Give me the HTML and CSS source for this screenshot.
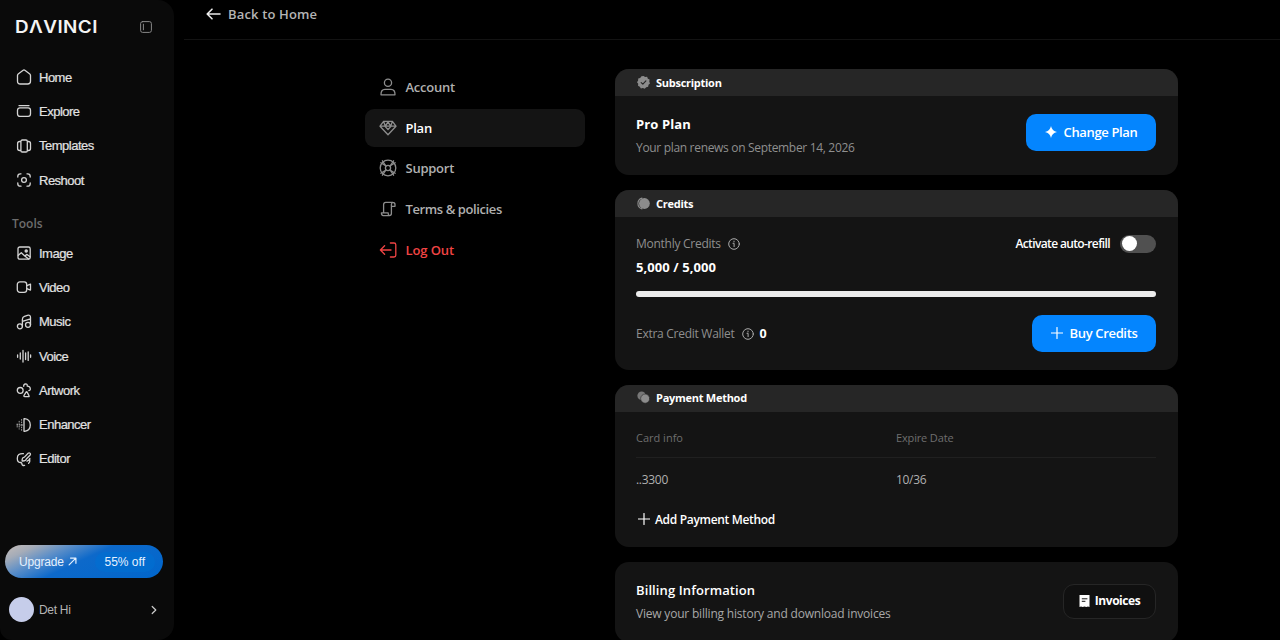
FILE: index.html
```html
<!DOCTYPE html>
<html lang="en">
<head>
<meta charset="utf-8">
<title>Davinci – Plan</title>
<link rel="stylesheet" href="styles.css">
</head>
<body>
<div class="app">
  <aside class="sidebar">
    <div class="brand">
      <span class="logo">DΛVINCI</span>
      <svg class="collapse" viewBox="0 0 12 12"><rect x=".6" y=".6" width="10.8" height="10.8" rx="2"/><path d="M3.4 3.2v5.6"/></svg>
    </div>
    <nav class="nav">
      <a class="nav-item"><svg viewBox="0 0 16 16"><path d="M1.5 6.4Q1.5 5.5 2.2 4.9L6.8 1.4Q8 .5 9.2 1.4L13.8 4.9Q14.5 5.5 14.5 6.4V12.2Q14.5 15 11.7 15H4.3Q1.5 15 1.5 12.2Z"/></svg><span>Home</span></a>
      <a class="nav-item"><svg viewBox="0 0 16 16"><path d="M3 2.6H13"/><rect x="1.5" y="4.8" width="13" height="8.6" rx="2.4"/></svg><span>Explore</span></a>
      <a class="nav-item"><svg viewBox="0 0 16 16"><rect x="4.9" y="2" width="6.4" height="12" rx="1.3"/><path d="M4.5 3.5H3.7Q1.6 3.5 1.6 5.6V10.4Q1.6 12.5 3.7 12.5H4.5M11.7 3.5H12.5Q14.5 3.5 14.5 5.6V10.4Q14.5 12.5 12.5 12.5H11.7"/></svg><span>Templates</span></a>
      <a class="nav-item"><svg viewBox="0 0 16 16"><circle cx="8" cy="8" r="2.4"/><path d="M1.8 5V4.3Q1.8 1.8 4.3 1.8H5M11 1.8H11.7Q14.2 1.8 14.2 4.3V5M14.2 11V11.7Q14.2 14.2 11.7 14.2H11M5 14.2H4.3Q1.8 14.2 1.8 11.7V11"/></svg><span>Reshoot</span></a>
    </nav>
    <div class="nav-title">Tools</div>
    <nav class="nav">
      <a class="nav-item"><svg viewBox="0 0 16 16"><rect x="2" y="2" width="12.2" height="12.2" rx="1.8"/><circle cx="10.2" cy="6" r="1.1" fill="currentColor"/><path d="M2.3 10.3L5.3 7.7L8.5 10.8L12.6 14M8.7 11L11 9.4L14 11.8"/></svg><span>Image</span></a>
      <a class="nav-item"><svg viewBox="0 0 16 16"><rect x="1.3" y="2.9" width="9.4" height="10.4" rx="2.6"/><path d="M10.8 6.6L14.5 5.1V11.1L10.8 9.6"/></svg><span>Video</span></a>
      <a class="nav-item"><svg viewBox="0 0 16 16"><circle cx="3.9" cy="12.3" r="2.5"/><circle cx="12" cy="10.8" r="2.5"/><path d="M6.4 12.3V5.2Q6.4 3.2 8.5 2.4L11.4 1.4Q14.5.5 14.5 3.5V10.8M6.4 7.3L14.5 4.8"/></svg><span>Music</span></a>
      <a class="nav-item"><svg viewBox="0 0 16 16"><path d="M1.6 7V9.3M4.3 5V11M7 2.4V14M9.6 5V11.5M12.2 3.8V12.4M14.6 7V9.3"/></svg><span>Voice</span></a>
      <a class="nav-item"><svg viewBox="0 0 16 16"><circle cx="4.2" cy="8.4" r="2.9"/><path d="M7.7 4.3Q7.5 2.1 9.6 1.9Q11.6 1.9 11.2 4.2Q14.5 4.2 14.3 7.3Q14 8.7 12.8 8.6M10.2 9.9L7.9 13.6Q7.7 14.6 8.7 14.6H12.4Q13.6 14.6 13 13.6L11 9.9Q10.6 9.3 10.2 9.9Z"/></svg><span>Artwork</span></a>
      <a class="nav-item"><svg viewBox="0 0 16 16"><path d="M8 1.7V14.3H8.6Q14.3 13.5 14.3 8T8.6 1.7Z"/><path class="dots" d="M5.6 2.5V13.5M3.2 4.3V12M1.2 7V10M1 8H7"/></svg><span>Enhancer</span></a>
      <a class="nav-item"><svg viewBox="0 0 16 16"><path d="M7.4 2.6Q1.3 2.2 1.3 7.4Q1.3 11.2 4.4 11.5Q6.1 11.7 5.9 13.2Q6.2 14.9 8.6 14.4M13.8 8.6Q14.2 10.6 12.6 12.4M6.2 8.2Q6.5 6.1 8.4 6.1L12.1 2.3Q13.2 1.4 14.2 2.4Q14.9 3.3 14 4.3L10.3 8Q9.9 10.2 6.1 10ZM11 10.2Q13.6 9.2 13.9 7.4"/></svg><span>Editor</span></a>
    </nav>
    <div class="side-foot">
      <a class="upgrade"><span class="up-label">Upgrade</span><svg viewBox="0 0 10 10"><path d="M1.2 8.8L8.7 1.3M2.8 1.2H8.8V7"/></svg><span class="off">55% off</span></a>
      <div class="user"><i class="avatar"></i><span class="user-name">Det Hi</span><svg viewBox="0 0 8 10"><path d="M2.2 1.5L5.8 5L2.2 8.5"/></svg></div>
    </div>
  </aside>
  <div class="page">
    <header class="topbar"><svg viewBox="0 0 15 12"><path d="M14 6H1.3M6 1.2L1.2 6L6 10.8"/></svg><span class="back">Back to Home</span></header>
    <main class="content">
      <nav class="settings">
        <a class="set-item"><svg viewBox="0 0 18 18"><circle cx="9" cy="4.7" r="3.6"/><path d="M2 16.8Q1.8 11.4 6 11.4H12Q16.2 11.4 16 16.8Z"/></svg><span>Account</span></a>
        <a class="set-item active"><svg viewBox="0 0 18 18"><path d="M4.6 2.4H13.4L17 7.2L9 15.8L1 7.2ZM1 7.2H17M4.6 2.4L6.4 7.2L9 2.8L11.6 7.2L13.4 2.4M6 7.4L9 10.5L12 7.4"/></svg><span>Plan</span></a>
        <a class="set-item"><svg viewBox="0 0 18 18"><circle cx="9" cy="9" r="7.8"/><circle cx="9" cy="9" r="2.6"/><path d="M7 7L3.4 1.8M7 7L1.8 3.8M11 7L14.6 1.8M11 7L16.2 3.8M7 11L3.4 16.2M7 11L1.8 14.2M11 11L14.6 16.2M11 11L16.2 14.2"/></svg><span>Support</span></a>
        <a class="set-item"><svg viewBox="0 0 18 18"><path d="M13.8 2.4H6.7Q4.6 2.4 4.6 4.6V12.8M13.8 2.4Q16 2.4 16 4.6V6.3H12.4M13.8 2.4Q12.4 2.7 12.4 4.5V13.5Q12.4 15.6 10.3 15.6H4.2Q2.4 15.4 2.4 12.8H9.2Q9 15.2 10.3 15.6"/></svg><span class="terms">Terms &amp; policies</span></a>
        <a class="set-item danger"><svg viewBox="0 0 18 18"><path d="M12 9H1.4M5.6 4.8L1.4 9L5.6 13.2M11.4 2H15Q16.8 2 16.8 3.8V14.2Q16.8 16 15 16H11.4"/></svg><span class="logout">Log Out</span></a>
      </nav>
      <div class="cards">
        <section class="card subscription">
          <h2 class="card-head"><svg viewBox="0 0 14 14"><path class="fill" d="M7 0L8.8 1.2L10.9.9L11.7 2.9L13.6 3.9L13.2 6L14 8L12.4 9.5L12 11.6L9.9 12L8.3 13.7L6.3 12.9L4.2 13.4L3 11.6L1.1 10.6L1.3 8.4L0 6.7L1.2 4.9L1.3 2.8L3.4 2.1L4.8.4Z"/><path class="check" d="M4.5 7.1L6.3 8.8L9.6 5.3"/></svg><span>Subscription</span></h2>
          <div class="card-body split">
            <div class="plan"><b class="plan-name">Pro Plan</b><span class="plan-note">Your plan renews on September 14, 2026</span></div>
            <button class="btn change"><svg viewBox="0 0 12 12"><path class="fill" d="M6 0Q7 5 12 6Q7 7 6 12Q5 7 0 6Q5 5 6 0Z"/></svg><span>Change Plan</span></button>
          </div>
        </section>
        <section class="card credits">
          <h2 class="card-head"><svg viewBox="0 0 14 14"><circle class="fill" cx="8" cy="7" r="5.8"/><path d="M5.4 1.2Q1 2.5 1 7T5.4 12.8"/></svg><span>Credits</span></h2>
          <div class="card-body">
            <div class="monthly"><span class="label">Monthly Credits</span><svg class="info" viewBox="0 0 12 12"><circle cx="6" cy="6" r="5.3"/><path d="M5 5.3H6.1V8.6M6 3.1V3.9"/></svg><span class="auto">Activate auto-refill</span><span class="toggle"><i></i></span></div>
            <div class="amount">5,000 / 5,000</div>
            <div class="progress"></div>
            <div class="wallet"><span class="label">Extra Credit Wallet</span><svg class="info" viewBox="0 0 12 12"><circle cx="6" cy="6" r="5.3"/><path d="M5 5.3H6.1V8.6M6 3.1V3.9"/></svg><b class="zero">0</b><button class="btn buy"><svg viewBox="0 0 12 12"><path d="M6 .5V11.5M.5 6H11.5"/></svg><span>Buy Credits</span></button></div>
          </div>
        </section>
        <section class="card payment">
          <h2 class="card-head"><svg viewBox="0 0 14 14"><circle class="dim" cx="5" cy="5.2" r="4.6"/><circle class="fill edge" cx="8.8" cy="8.2" r="4.9"/></svg><span>Payment Method</span></h2>
          <div class="card-body">
            <div class="row labels"><span>Card info</span><span class="expire">Expire Date</span></div>
            <div class="row values"><span>..3300</span><span>10/36</span></div>
            <a class="add"><svg viewBox="0 0 12 12"><path d="M6 .5V11.5M.5 6H11.5"/></svg><span>Add Payment Method</span></a>
          </div>
        </section>
        <section class="card billing split">
          <div class="bill"><b class="bill-name">Billing Information</b><span class="bill-note">View your billing history and download invoices</span></div>
          <button class="btn-outline"><svg viewBox="0 0 11 12"><path class="fill" d="M.5 0H10.5V12L9 11.4L7.3 12L5.5 11.4L3.7 12L2 11.4L.5 12Z"/><path class="lines" d="M3.2 3.8H8M3.2 6.3H6"/></svg><span>Invoices</span></button>
        </section>
      </div>
    </main>
  </div>
</div>
</body>
</html>
```
FILE: styles.css
```css
* { box-sizing: border-box; }
body { margin: 0; background: #000; color: #fff; font-family: "Open Sans", "Noto Sans", sans-serif; overflow: hidden; }
svg { fill: none; stroke: currentColor; stroke-width: 1.2; stroke-linecap: round; stroke-linejoin: round; flex: none; }
svg .fill { fill: currentColor; stroke: none; }
span, b { white-space: nowrap; }
.app { display: flex; width: 1280px; height: 640px; overflow: hidden; }

.sidebar { width: 174px; height: 640px; flex: none; display: flex; flex-direction: column; background: #0a0a0a; border-radius: 0 16px 16px 12px; font-family: "Liberation Sans", Arial, sans-serif; }
.brand { display: flex; align-items: center; justify-content: space-between; height: 54px; padding: 0 22px 0 15px; }
.logo { font: 600 17px/20px Inter, sans-serif; color: #f4f4f4; letter-spacing: .4px; transform: scaleX(1.11); transform-origin: left; }
.collapse { width: 12px; height: 12px; color: #888; stroke-width: 1; }
.nav { display: flex; flex-direction: column; padding: 6px 0 0 16px; }
.nav-item { display: flex; align-items: center; gap: 7px; height: 34.3px; font-size: 13px; letter-spacing: -.5px; color: #e2e2e2; -webkit-text-stroke: .2px; }
.nav-item svg { width: 16px; height: 16px; color: #d5d5d5; stroke-width: 1.3; }
.nav-item svg .dots { stroke-width: 1; stroke-dasharray: .8 1.7; opacity: .75; }
.nav-title { height: 37px; padding: 17px 0 0 12px; font: 600 12px/20px "Open Sans", sans-serif; color: #6d6d6d; }
.nav-title + .nav { padding-top: 1.8px; }
.side-foot { margin-top: auto; padding: 0 0 18px 5px; }
.upgrade { display: flex; align-items: center; width: 158px; height: 33px; padding: 0 8px 0 14px; border-radius: 17px; font-size: 12px; color: #e5f1ff; background: linear-gradient(155deg, #c6bdb8 0%, #a5acb8 14%, #5d8fc8 29%, #0d69ca 48%, #0066cc 100%); }
.up-label { letter-spacing: -.2px; }
.upgrade svg { width: 9px; height: 9px; margin-left: 4px; stroke-width: 1.3; }
.off { margin-left: auto; padding: 3px 10px; border-radius: 10px; background: rgba(0,112,210,.6); }
.user { display: flex; align-items: center; height: 25px; margin-top: 19px; padding: 0 16px 0 4px; }
.avatar { width: 25px; height: 25px; border-radius: 50%; background: #c6cdea; }
.user-name { margin-left: 5px; font-size: 12px; letter-spacing: -.3px; color: #b4b4b4; }
.user svg { width: 8px; height: 10px; margin-left: auto; color: #ccc; }

.page { flex: 1; min-width: 0; padding-left: 10px; }
.topbar { display: flex; align-items: center; gap: 7px; height: 40px; padding: 0 0 11px 22px; border-bottom: 1px solid #131313; color: #b4b4b4; font-size: 13px; font-weight: 600; letter-spacing: .15px; }
.topbar svg { width: 15px; height: 12px; color: #ececec; stroke-width: 1.6; }
.content { display: flex; gap: 30px; padding: 29px 0 0 181px; }
.settings { width: 220px; display: flex; flex-direction: column; gap: 2.7px; flex: none; margin-top: -1px; }
.set-item { display: flex; align-items: center; gap: 8.5px; height: 38px; padding-left: 14px; border-radius: 9px; font-size: 13px; font-weight: 600; letter-spacing: -.25px; color: #b0b0b0; }
.set-item svg { width: 18px; height: 18px; color: #8d8d8d; stroke-width: 1.3; }
.set-item.active { background: #141414; color: #fff; }
.set-item.danger, .set-item.danger svg { color: #f04444; }
.terms { letter-spacing: -.4px; }
.logout { letter-spacing: -.1px; }

.cards { width: 563px; }
.card { border-radius: 14px; background: #141414; overflow: hidden; margin-bottom: 15px; }
.card-head { display: flex; align-items: center; gap: 6px; height: 27px; margin: 0; padding: 0 0 1px 22px; background: #262626; font-size: 11px; font-weight: 700; letter-spacing: -.27px; color: #fff; }
.card-head svg { width: 13px; height: 13px; color: #8c8c8c; }
.check { stroke: #262626; }
.dim { fill: #777; stroke: none; }
svg .edge { stroke: #262626; stroke-width: .6; }
.card-body { padding: 0 22px 0 21px; }
.split { display: flex; align-items: center; justify-content: space-between; }
.plan, .bill { display: flex; flex-direction: column; }
.btn { display: flex; align-items: center; justify-content: center; gap: 7px; height: 37px; padding: 0 0 1px; border: 0; border-radius: 10px; background: #0485fe; color: #fff; font: 600 13px/18px "Open Sans", sans-serif; letter-spacing: -.35px; }
.btn svg { width: 12px; height: 12px; stroke-width: 1.2; }
.change { width: 130px; }
.buy { width: 124px; margin-left: auto; }

.subscription { height: 106px; }
.subscription .card-body { height: 72px; }
.plan { padding-top: 8px; }
.plan-name { font-size: 13px; line-height: 24px; letter-spacing: .1px; }
.plan-note { font-size: 12px; line-height: 24px; letter-spacing: -.32px; color: #8f8f8f; }

.credits { height: 179.5px; }
.monthly { display: flex; align-items: center; height: 20px; margin-top: 16.5px; }
.label { font-size: 12px; letter-spacing: -.27px; color: #8f8f8f; }
.info { width: 12px; height: 12px; margin-left: 7px; color: #aaa; stroke-width: 1; }
.auto { margin-left: auto; font-size: 12px; font-weight: 600; letter-spacing: -.63px; }
.toggle { width: 36px; height: 18px; margin-left: 10px; padding: 1.5px; border-radius: 9px; background: #505050; }
.toggle i { display: block; width: 15px; height: 15px; border-radius: 50%; background: #fff; }
.amount { height: 28px; font-size: 13px; font-weight: 700; line-height: 27px; letter-spacing: .08px; }
.progress { height: 6px; margin-top: 9.5px; border-radius: 3px; background: #ececec; }
.wallet { display: flex; align-items: center; margin-top: 18px; }
.zero { margin-left: 6px; font-size: 12.5px; }
.wallet .label, .wallet .zero { padding-bottom: 1px; }

.payment { height: 162px; }
.row { display: grid; grid-template-columns: 1fr 1fr; align-items: center; }
.labels { height: 46px; padding-top: 6px; border-bottom: 1px solid #202020; font-size: 11px; color: #6e6e6e; }
.expire { letter-spacing: -.15px; }
.values { height: 43px; font-size: 12px; letter-spacing: -.3px; color: #b0b0b0; }
.add { display: flex; align-items: center; gap: 5px; height: 37px; padding-left: 2px; font-size: 12px; font-weight: 600; letter-spacing: -.32px; }
.add svg { width: 12px; height: 12px; }

.billing { height: 80px; padding: 0 22px 1px 21px; margin: 0; }
.bill { padding-top: 1px; }
.bill-name { font-size: 13px; font-weight: 600; line-height: 23px; letter-spacing: .1px; }
.bill-note { font-size: 12px; line-height: 23px; letter-spacing: -.2px; color: #a8a8a8; }
.btn-outline { display: flex; align-items: center; justify-content: center; gap: 5px; width: 93px; height: 35px; padding: 0 0 1px; border: 1px solid #262626; border-radius: 11px; background: #101010; color: #fff; font: 700 12px/18px "Open Sans", sans-serif; letter-spacing: -.45px; }
.btn-outline svg { width: 11px; height: 12px; }
.lines { stroke: #141414; stroke-width: 1; }
```
